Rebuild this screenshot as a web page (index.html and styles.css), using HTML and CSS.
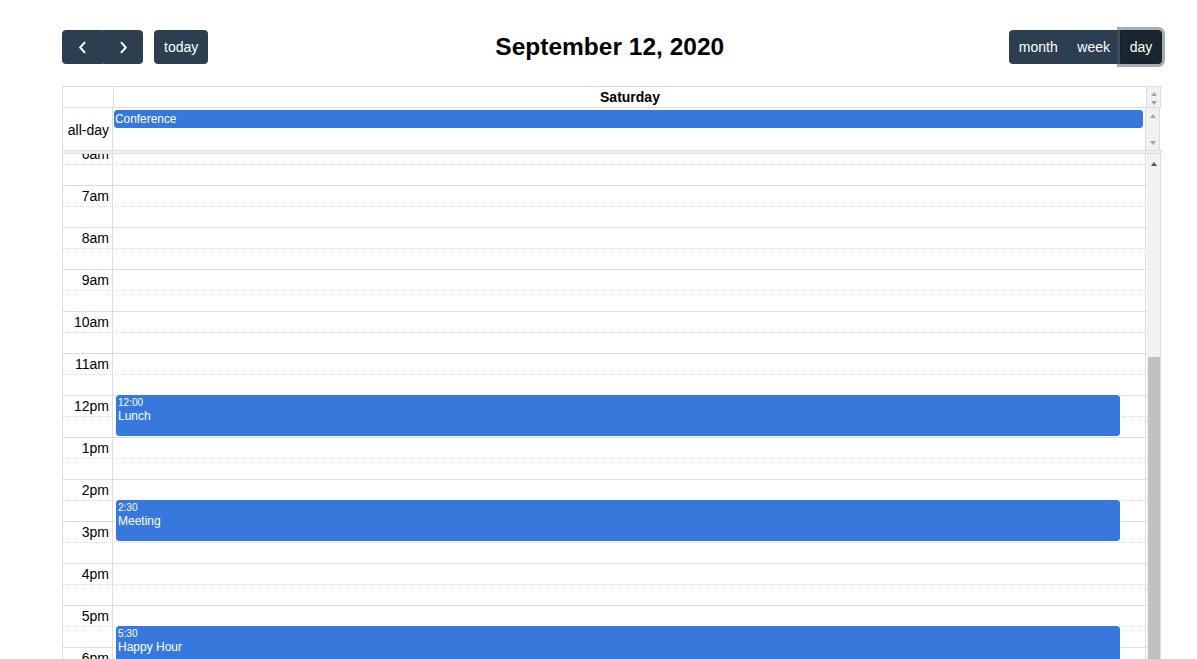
FILE: index.html
```html
<!DOCTYPE html>
<html lang="en">
<head>
<meta charset="utf-8">
<title>Calendar - Day</title>
<link rel="stylesheet" href="styles.css">
</head>
<body>
<div class="page">
  <div class="cal">
    <div class="toolbar">
      <div class="chunk">
        <div class="btn-group">
          <button class="btn icon-btn prev" aria-label="prev">
            <svg width="9" height="13" viewBox="0 0 9 13"><path d="M7 1.2 L2.2 6.5 L7 11.8" fill="none" stroke="#fff" stroke-width="2"/></svg>
          </button>
          <button class="btn icon-btn next" aria-label="next">
            <svg width="9" height="13" viewBox="0 0 9 13"><path d="M2 1.2 L6.8 6.5 L2 11.8" fill="none" stroke="#fff" stroke-width="2"/></svg>
          </button>
        </div>
        <button class="btn solo">today</button>
      </div>
      <h2 class="title">September 12, 2020</h2>
      <div class="btn-group views">
        <button class="btn">month</button>
        <button class="btn">week</button>
        <button class="btn active">day</button>
      </div>
    </div>

    <div class="view">
      <div class="row head">
        <div class="axis"></div>
        <div class="lane day-head">Saturday</div>
        <div class="gutter gutter-head"><span class="arr up"></span><span class="arr down"></span></div>
      </div>
      <div class="row allday">
        <div class="axis allday-label">all-day</div>
        <div class="lane"><a class="adevent">Conference</a></div>
        <div class="gutter gutter-allday"><span class="arr up"></span><span class="arr down"></span></div>
      </div>
      <div class="divider"></div>
      <div class="row body">
        <div class="scroller">
          <div class="slots">
            <div class="slot"><div class="slot-axis">6am</div><div class="slot-lane"></div></div>
            <div class="slot minor"><div class="slot-axis"></div><div class="slot-lane"></div></div>
            <div class="slot"><div class="slot-axis">7am</div><div class="slot-lane"></div></div>
            <div class="slot minor"><div class="slot-axis"></div><div class="slot-lane"></div></div>
            <div class="slot"><div class="slot-axis">8am</div><div class="slot-lane"></div></div>
            <div class="slot minor"><div class="slot-axis"></div><div class="slot-lane"></div></div>
            <div class="slot"><div class="slot-axis">9am</div><div class="slot-lane"></div></div>
            <div class="slot minor"><div class="slot-axis"></div><div class="slot-lane"></div></div>
            <div class="slot"><div class="slot-axis">10am</div><div class="slot-lane"></div></div>
            <div class="slot minor"><div class="slot-axis"></div><div class="slot-lane"></div></div>
            <div class="slot"><div class="slot-axis">11am</div><div class="slot-lane"></div></div>
            <div class="slot minor"><div class="slot-axis"></div><div class="slot-lane"></div></div>
            <div class="slot"><div class="slot-axis">12pm</div><div class="slot-lane"></div></div>
            <div class="slot minor"><div class="slot-axis"></div><div class="slot-lane"></div></div>
            <div class="slot"><div class="slot-axis">1pm</div><div class="slot-lane"></div></div>
            <div class="slot minor"><div class="slot-axis"></div><div class="slot-lane"></div></div>
            <div class="slot"><div class="slot-axis">2pm</div><div class="slot-lane"></div></div>
            <div class="slot minor"><div class="slot-axis"></div><div class="slot-lane"></div></div>
            <div class="slot"><div class="slot-axis">3pm</div><div class="slot-lane"></div></div>
            <div class="slot minor"><div class="slot-axis"></div><div class="slot-lane"></div></div>
            <div class="slot"><div class="slot-axis">4pm</div><div class="slot-lane"></div></div>
            <div class="slot minor"><div class="slot-axis"></div><div class="slot-lane"></div></div>
            <div class="slot"><div class="slot-axis">5pm</div><div class="slot-lane"></div></div>
            <div class="slot minor"><div class="slot-axis"></div><div class="slot-lane"></div></div>
            <div class="slot"><div class="slot-axis">6pm</div><div class="slot-lane"></div></div>
            <div class="slot minor"><div class="slot-axis"></div><div class="slot-lane"></div></div>
            <div class="slot"><div class="slot-axis">7pm</div><div class="slot-lane"></div></div>
            <div class="slot minor"><div class="slot-axis"></div><div class="slot-lane"></div></div>

            <div class="events">
              <a class="tevent" style="top:252px;height:41px"><div class="ev-time">12:00</div><div class="ev-title">Lunch</div></a>
              <a class="tevent" style="top:357px;height:41px"><div class="ev-time">2:30</div><div class="ev-title">Meeting</div></a>
              <a class="tevent" style="top:483px;height:41px"><div class="ev-time">5:30</div><div class="ev-title">Happy Hour</div></a>
            </div>
          </div>
        </div>
        <div class="gutter gutter-body"><span class="arr up dark"></span><span class="thumb"></span></div>
      </div>
    </div>
  </div>
</div>
</body>
</html>
```

FILE: styles.css
```css
html, body {
  margin: 0;
  height: 100%;
  overflow: hidden;
  background: #fff;
}

body {
  font-family: "Liberation Sans", Arial, Helvetica, sans-serif;
  font-size: 14px;
  color: #000;
}

.page {
  padding: 30px 0 0 62px;
}

.cal {
  width: 1100px;
}

/* toolbar */
.toolbar {
  display: flex;
  justify-content: space-between;
  align-items: center;
  height: 34px;
  margin-bottom: 22px;
}

.chunk {
  display: flex;
  align-items: center;
}

.title {
  margin: 0;
  font-size: 24.5px;
  font-weight: bold;
  line-height: 34px;
  position: relative;
  left: 1px;
}

.btn-group {
  display: flex;
}

.btn {
  box-sizing: border-box;
  height: 34px;
  margin: 0;
  padding: 0 9.1px;
  background: #2c3e50;
  border: 1px solid #2c3e50;
  border-radius: 0;
  color: #fff;
  font-family: inherit;
  font-size: 14px;
  line-height: 21px;
  cursor: pointer;
}

.views .btn {
  padding: 0 8.8px;
}

.btn-group .btn:first-child {
  border-radius: 3.5px 0 0 3.5px;
}

.btn-group .btn:last-child {
  border-radius: 0 3.5px 3.5px 0;
}

.btn.solo {
  margin-left: 11px;
  border-radius: 3.5px;
}

.icon-btn {
  display: flex;
  align-items: center;
  justify-content: center;
  padding: 0;
}

.icon-btn.prev {
  width: 41px;
}

.icon-btn.next {
  width: 40px;
}

.btn.active {
  position: relative;
  z-index: 1;
  background: #1a252f;
  border-color: #151e27;
  box-shadow: 0 0 0 3px rgba(76, 91, 106, 0.5);
}

/* view */
.view {
  border-left: 1px solid #ddd;
}

.row {
  display: flex;
}

.axis {
  width: 50px;
  border-right: 1px solid #ddd;
  flex: none;
}

.lane {
  width: 1032px;
  border-right: 1px solid #ddd;
  flex: none;
}

.gutter {
  width: 14px;
  border-right: 1px solid #ddd;
  background: #f1f1f1;
  flex: none;
  display: flex;
  flex-direction: column;
  align-items: center;
}

.head {
  height: 20px;
  border-top: 1px solid #ddd;
  border-bottom: 1px solid #ddd;
}

.day-head {
  text-align: center;
  font-weight: bold;
  line-height: 20px;
}

.gutter-head {
  padding-top: 5px;
  box-sizing: border-box;
  gap: 5px;
}

.allday {
  height: 42px;
  border-bottom: 1px solid #ddd;
}

.allday-label {
  display: flex;
  align-items: center;
  justify-content: flex-end;
  padding-right: 3px;
  box-sizing: border-box;
  padding-top: 2px;
}

.adevent {
  display: block;
  margin: 2px 2px 0 1px;
  padding-left: 0;
  background: #3778dc;
  border: 1px solid #3778dc;
  border-radius: 3px;
  color: #fff;
  font-size: 11.9px;
  line-height: 16px;
}

.gutter-allday {
  justify-content: space-between;
  padding: 6px 0 5px;
  box-sizing: border-box;
}

.arr {
  display: block;
  width: 0;
  height: 0;
  border-left: 3.5px solid transparent;
  border-right: 3.5px solid transparent;
}

.arr.up {
  border-bottom: 4px solid #a3a3a3;
}

.arr.down {
  border-top: 4px solid #a3a3a3;
}

.arr.up.dark {
  border-bottom-color: #505050;
}

.divider {
  height: 2px;
  background: #f0f0f0;
  border-bottom: 1px solid #ddd;
  width: 1098px;
  border-right: 1px solid #ddd;
}

.body {
  height: 520px;
}

.scroller {
  width: 1084px;
  overflow: hidden;
  flex: none;
}

.slots {
  position: relative;
  margin-top: -11px;
}

.slot {
  display: flex;
  height: 20px;
  border-top: 1px solid #ddd;
}

.slot.minor {
  border-top-style: dotted;
}

.slot-axis {
  width: 50px;
  box-sizing: border-box;
  padding-right: 3px;
  border-right: 1px solid #ddd;
  text-align: right;
  line-height: 20px;
  white-space: nowrap;
}

.slot-lane {
  width: 1032px;
  border-right: 1px solid #ddd;
}

.events {
  position: absolute;
  top: 0;
  left: 51px;
  width: 1032px;
  height: 100%;
}

.tevent {
  position: absolute;
  left: 2px;
  right: 26px;
  box-sizing: border-box;
  padding: 1px 1px 0;
  background: #3778dc;
  border: 1px solid #3778dc;
  border-radius: 3px;
  box-shadow: 0 0 0 1px #fff;
  color: #fff;
  overflow: hidden;
}

.ev-time {
  font-size: 10px;
  line-height: 11px;
}

.ev-title {
  font-size: 12px;
  line-height: 16px;
}

.gutter-body {
  padding-top: 8px;
  box-sizing: border-box;
  height: 520px;
}

.thumb {
  display: block;
  width: 12px;
  margin-top: 191px;
  flex: 1;
  background: #c1c1c1;
}
```
